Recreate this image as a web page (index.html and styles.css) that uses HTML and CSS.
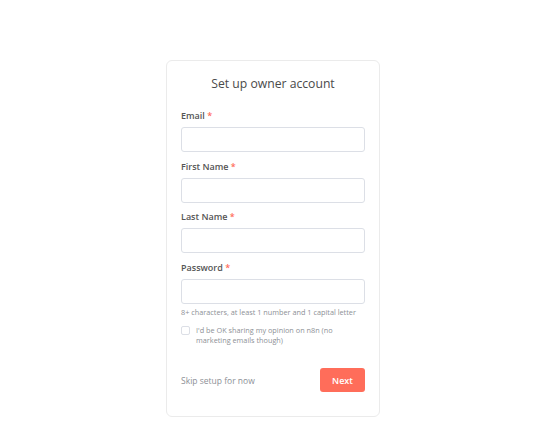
FILE: index.html
```html
<!DOCTYPE html>
<html lang="en">
    <head>
        <meta charset="UTF-8">
        <meta name="viewport" content="width=device-width, initial-scale=1.0">
        <title>Set up owner account</title>
        <link rel="stylesheet" href="styles.css">
    </head>
    <body>
        <div class="setup-card">
            <h1 class="title">Set up owner account</h1>
            <div class="field">
                <label class="field-label">Email <span class="required">*</span></label>
                <input type="text" class="field-input">
            </div>
            <div class="field">
                <label class="field-label">First Name <span class="required">*</span></label>
                <input type="text" class="field-input">
            </div>
            <div class="field">
                <label class="field-label">Last Name <span class="required">*</span></label>
                <input type="text" class="field-input">
            </div>
            <div class="field">
                <label class="field-label">Password <span class="required">*</span></label>
                <input type="password" class="field-input">
                <div class="hint">8+ characters, at least 1 number and 1 capital letter</div>
            </div>
            <label class="agree">
                <span class="checkbox"></span>
                <span class="agree-text">I'd be OK sharing my opinion on n8n (no marketing emails though)</span>
            </label>
            <div class="actions">
                <a class="skip">Skip setup for now</a>
                <button class="next-button">Next</button>
            </div>
        </div>
    </body>
</html>
```

FILE: styles.css
```css
body {
    font-family: "Open Sans", sans-serif;
    margin: 0;
    background-color: #fff;
    color: #555;
}
.setup-card {
    box-sizing: border-box;
    width: 214px;
    margin: 60px 0 0 166px;
    padding: 13px 14px 24px;
    border: 1px solid #ebebeb;
    border-radius: 6px;
}
.title {
    margin: 0 0 16px;
    font-size: 12.2px;
    font-weight: 400;
    line-height: 20px;
    text-align: center;
    color: #4a4a4a;
}
.field {
    margin-bottom: 8.5px;
}
.field-label {
    display: block;
    margin-bottom: 5px;
    font-size: 9px;
    font-weight: 600;
    line-height: 12px;
    color: #555;
}
.required {
    color: #ff6d5a;
}
.field-input {
    display: block;
    box-sizing: border-box;
    width: 100%;
    height: 25px;
    margin: 0;
    border: 1px solid #dcdfe6;
    border-radius: 3px;
    background-color: #fff;
}
.hint {
    margin-top: 3px;
    font-size: 7.3px;
    line-height: 11px;
    color: #8d9096;
}
.agree {
    display: flex;
    gap: 6px;
    margin-top: -1px;
}
.checkbox {
    flex: none;
    box-sizing: border-box;
    width: 9px;
    height: 9px;
    margin-top: 1px;
    border: 1px solid #dcdfe6;
    border-radius: 2px;
}
.agree-text {
    max-width: 145px;
    font-size: 7.3px;
    line-height: 10px;
    color: #8d9096;
}
.actions {
    display: flex;
    justify-content: space-between;
    align-items: center;
    margin-top: 23px;
}
.skip {
    font-size: 8.5px;
    color: #8d9096;
    cursor: pointer;
}
.next-button {
    width: 45px;
    height: 24px;
    padding: 0;
    border: none;
    border-radius: 3px;
    background-color: #ff6d5a;
    color: #fff;
    font-family: "Open Sans", sans-serif;
    font-size: 9px;
    font-weight: 600;
    cursor: pointer;
}
```
